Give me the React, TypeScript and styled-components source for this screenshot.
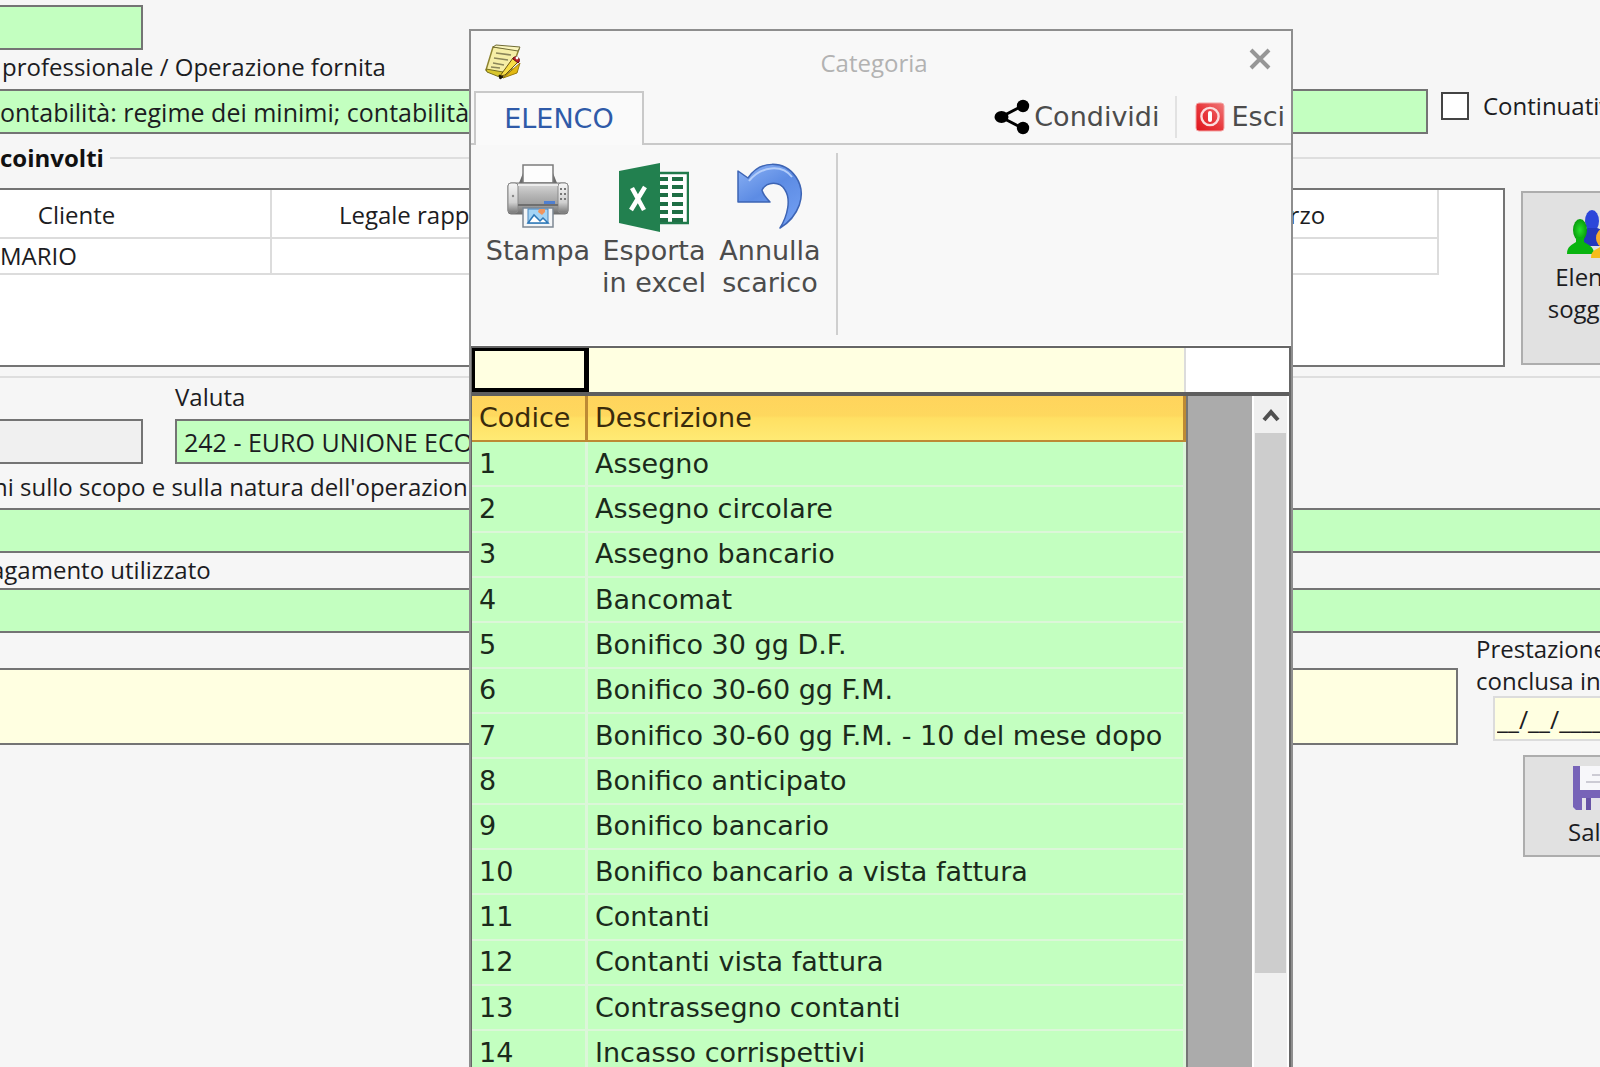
import React from "react";
import styled, { createGlobalStyle, css } from "styled-components";

const GREEN = "#c3ffc0";
const CREAM = "#ffffe1";
const LINE = "#747474";
const UI = '"Open Sans", "Noto Sans", sans-serif';
const GRID = '"DejaVu Sans", Verdana, sans-serif';

const Global = createGlobalStyle`
  *, *::before, *::after { box-sizing: border-box; }
  body { margin: 0; background: #f6f6f6; }
  input, textarea, button { font: inherit; color: inherit; margin: 0; border-radius: 0; outline: none; }
`;

const Screen = styled.div`
  position: relative;
  height: 100vh;
  overflow: hidden;
  background: #f6f6f6;
  color: #1c1c22;
  font: 24px/34px ${UI};
  white-space: nowrap;
`;

const Form = styled.form`
  display: flex;
  flex-direction: column;
  padding-top: 5px;
`;

const Row = styled.div<{ $gap?: number }>`
  display: flex;
  align-items: flex-start;
  gap: ${(p) => p.$gap ?? 0}px;
`;

const Label = styled.label<{ $lead?: number; $above?: number; $below?: number }>`
  display: block;
  margin: ${(p) => p.$above ?? 0}px 0 ${(p) => p.$below ?? 4}px ${(p) => p.$lead ?? 0}px;
`;

const fieldBox = css<{ $tone?: string; $width?: number; $bleed?: boolean }>`
  background: ${(p) => p.$tone ?? GREEN};
  border: 2px solid ${LINE};
  ${(p) => (p.$width ? `flex: none; width: ${p.$width}px;` : "flex: 1; width: 100%;")}
  min-width: 0;
  padding: 0 7px;
  ${(p) => p.$bleed && "border-left: 0; padding-left: 0;"}
`;

const Field = styled.input<{ $tone?: string; $width?: number; $bleed?: boolean; $open?: boolean }>`
  ${fieldBox}
  display: block;
  height: 45px;
  font-size: 25px;
  ${(p) => p.$open && "border-right: 0;"}
`;

const Notes = styled.textarea<{ $tone?: string; $bleed?: boolean }>`
  ${fieldBox}
  height: 77px;
  margin-top: 35px;
  resize: none;
`;

const CheckLabel = styled.label`
  display: flex;
  align-items: center;
  gap: 14px;
  width: 159px;
  height: 34px;
`;

const Check = styled.input`
  appearance: none;
  flex: none;
  width: 28px;
  height: 28px;
  background: #fff;
  border: 2px solid #444;
`;

const Group = styled.fieldset`
  margin: 7px 0 2px;
  padding: 13px 0 9px;
  min-width: 0;
  border: solid #dedede;
  border-width: 2px 0;
`;

const Legend = styled.legend`
  padding: 0 6px 0 0;
  font-weight: 700;
  color: #111;
`;

const People = styled.div`
  flex: 1;
  min-width: 0;
  height: 179px;
  overflow: hidden;
  background: #fff;
  border: 2px solid ${LINE};
  border-left: 0;
`;

const PeopleTable = styled.table`
  table-layout: fixed;
  border-collapse: separate;
  border-spacing: 0;
  width: 1556px;
  margin-left: -117px;

  th, td {
    font-weight: 400;
    border: solid #dcdcdc;
    border-width: 0 2px 2px 0;
  }
  th { height: 49px; padding: 3px 0 0; }
  td { height: 35px; padding: 0 0 0 117px; }
`;

const SideSlot = styled.div`
  flex: none;
  width: 79px;
`;

const PushButton = styled.button<{ $width: number; $height: number; $top: number }>`
  display: flex;
  flex-direction: column;
  align-items: center;
  width: ${(p) => p.$width}px;
  height: ${(p) => p.$height}px;
  margin-top: ${(p) => p.$top}px;
  padding: 0;
  background: #e1e1e1;
  border: 2px solid #adadad;
  line-height: 32px;
`;

const PushIcon = styled.span<{ $top: number }>`
  display: block;
  height: ${(p) => p.$top + 51}px;
  padding-top: ${(p) => p.$top}px;
  line-height: 0;
`;

const Closing = styled.div`
  flex: none;
  width: 124px;
`;

const ClosingLabel = styled.label`
  display: block;
  line-height: 32px;
`;

const DateField = styled.input`
  display: block;
  width: 160px;
  height: 45px;
  margin: -1px 0 14px 17px;
  padding: 0 2px;
  background: ${CREAM};
  border: 2px solid #dcdcdc;
  font-size: 25px;
`;

const SaveSlot = styled.div`
  padding-left: 47px;
`;

const Dialog = styled.section`
  position: absolute;
  top: 29px;
  bottom: 0;
  left: 469px;
  width: 824px;
  display: flex;
  flex-direction: column;
  background: #f8f8f8;
  border: 2px solid #8e8e8e;
  border-bottom: 0;
  font: 27px/32px ${GRID};
  color: #4c4c4c;
`;

const TitleBar = styled.header`
  display: grid;
  grid-template-columns: 60px 1fr 74px;
  align-items: center;
  height: 60px;
  flex: none;
`;

const TitleIcon = styled.span`
  padding: 2px 0 0 13px;
  line-height: 0;
`;

const Title = styled.h1`
  margin: 4px 0 0;
  font: 24px/32px ${UI};
  color: #b2b2b2;
  text-align: center;
`;

const PlainButton = styled.button`
  display: flex;
  align-items: center;
  padding: 0;
  background: none;
  border: 0;
`;

const CloseButton = styled(PlainButton)`
  padding: 0 0 4px 32px;
  height: 56px;
`;

const TabRow = styled.div`
  display: flex;
  flex: none;
  height: 54px;
`;

const TabEdge = styled.span<{ $grow?: boolean }>`
  ${(p) => (p.$grow ? "flex: 1;" : "width: 3px;")}
  border-bottom: 2px solid #c9c9c9;
`;

const Tab = styled.button`
  width: 170px;
  padding: 0;
  background: #fafafa;
  border: 2px solid #c9c9c9;
  border-bottom: 0;
  color: #2f5aa8;
`;

const TabActions = styled.div`
  display: flex;
  align-items: center;
  border-bottom: 2px solid #c9c9c9;
`;

const TabAction = styled(PlainButton)<{ $gap: number }>`
  gap: ${(p) => p.$gap}px;
`;

const TabDivider = styled.span`
  width: 2px;
  height: 42px;
  margin: 0 18px 0 15px;
  background: #e2e2e2;
`;

const Ribbon = styled.div`
  display: flex;
  flex: none;
  height: 201px;
  padding: 8px 0 10px 9px;
  border-bottom: 1px solid #fff;
`;

const RibbonButton = styled.button`
  display: flex;
  flex-direction: column;
  align-items: center;
  width: 116px;
  padding: 10px 0 0;
  background: none;
  border: 0;
  line-height: 32px;
`;

const RibbonIcon = styled.span`
  height: 72px;
  line-height: 0;
`;

const RibbonDivider = styled.span`
  width: 2px;
  margin-left: 8px;
  background: #cfcfcf;
`;

const Browser = styled.div`
  flex: 1;
  min-height: 0;
  display: flex;
  flex-direction: column;
  border: solid #666;
  border-width: 2px 2px 0 1px;
  background: #fff;
`;

const FilterRow = styled.div`
  display: flex;
  flex: none;
  height: 48px;
  border-bottom: 4px solid #5e5e5e;
`;

const CodeFilter = styled.input`
  width: 117px;
  background: ${CREAM};
  border: solid #000;
  border-width: 3px 5px 4px 3px;
`;

const TextFilter = styled.input`
  width: 597px;
  background: ${CREAM};
  border: 0;
  border-right: 2px solid #dcdcdc;
`;

const ListArea = styled.div`
  flex: 1;
  min-height: 0;
  display: flex;
  overflow: hidden;
`;

const List = styled.table`
  flex: none;
  table-layout: fixed;
  border-collapse: separate;
  border-spacing: 0;
  width: 714px;
  height: 681px;
  background: ${GREEN};
  color: #1b2a1b;

  th, td {
    padding: 0 0 0 7px;
    font-weight: 400;
    text-align: left;
    line-height: 32px;
  }
  th {
    height: 46px;
    color: #3a2b0c;
    background: linear-gradient(#ffd45c 0%, #fed85e 45%, #ffe063 50%, #ffea74 100%);
    border: solid #bd8a34;
    border-width: 0 3px 2px 0;
  }
  td {
    border: solid #dcf6d9;
    border-width: 0 3px 2px 0;
  }
`;

const Empty = styled.div`
  flex: 1;
  background: #ababab;
  border-left: 2px solid #757575;
`;

const ScrollBar = styled.div`
  flex: none;
  display: flex;
  flex-direction: column;
  align-items: center;
  width: 37px;
  background: #f0f0f0;
  border: solid #fff;
  border-width: 0 2px;
`;

const ScrollUp = styled(PlainButton)`
  justify-content: center;
  width: 33px;
  height: 37px;
`;

const Thumb = styled.span`
  width: 31px;
  height: 540px;
  background: #cdcdcd;
`;

const NotesIcon = () => (
  <svg width="38" height="36" viewBox="0 0 38 36" aria-hidden="true">
    <path d="M9 3 35 5 27 27 20 33 2 26Z" fill="#f6eea6" stroke="#8e8431" strokeWidth="1.5" />
    <path d="M2 25 19 28 18 34 3 28Z" fill="#d9c62c" stroke="#77701d" />
    <path d="M9 3 12 1 36 3 34 7Z" fill="#fbf6bd" stroke="#6f6a35" strokeWidth="1" />
    <path d="M12 9l15 2M10 14l14 2M9 19l11 2M7 23l9 1" stroke="#8c865a" strokeWidth="1.6" />
    <path d="M36 19 33 29 19 34Z" fill="#e3b911" stroke="#9a7c10" />
    <path d="M16 32 29 14 34 18 21 31Z" fill="#f7dd45" stroke="#6b5410" />
    <path d="M29 14c3-3 8 0 6 4l-1 1-5-4Z" fill="#b8202a" stroke="#6a1016" />
    <circle cx="33" cy="14" r="1.4" fill="#fff" />
    <path d="m16 35-1-4 4 2Z" fill="#1d1604" stroke="#1d1604" />
  </svg>
);

const CloseIcon = () => (
  <svg width="22" height="22" viewBox="0 0 22 22" aria-hidden="true">
    <path d="M2 2 20 20M20 2 2 20" stroke="#969696" strokeWidth="4" />
  </svg>
);

const ShareIcon = () => (
  <svg width="36" height="36" viewBox="0 0 36 36" aria-hidden="true">
    <path d="M28 7 7 18 28 29" fill="none" stroke="#000" strokeWidth="3" />
    <circle cx="29" cy="7" r="6.2" />
    <ellipse cx="7.5" cy="18" rx="7" ry="6" />
    <circle cx="29" cy="29" r="6.2" />
  </svg>
);

const ExitIcon = () => (
  <svg width="30" height="30" viewBox="0 0 30 30" aria-hidden="true">
    <defs>
      <linearGradient id="exit" x1="1" y1="0" x2="0" y2="1">
        <stop offset="0" stopColor="#f07a7a" />
        <stop offset=".5" stopColor="#e8383c" />
        <stop offset="1" stopColor="#e0141c" />
      </linearGradient>
    </defs>
    <rect x="1" y="1" width="28" height="28" rx="3" fill="url(#exit)" stroke="#f3a3a3" />
    <circle cx="15" cy="14.5" r="8.6" fill="none" stroke="#fbdcdc" strokeWidth="2.4" />
    <rect x="13" y="9" width="4" height="11" rx="2" fill="#fff" />
  </svg>
);

const PrinterIcon = () => (
  <svg width="64" height="66" viewBox="0 0 64 66" aria-hidden="true">
    <defs>
      <linearGradient id="shell" x1="0" y1="0" x2="0" y2="1">
        <stop offset="0" stopColor="#d9d9d9" />
        <stop offset=".4" stopColor="#b5b5b5" />
        <stop offset=".75" stopColor="#9b9b9b" />
        <stop offset="1" stopColor="#6c6c6c" />
      </linearGradient>
      <linearGradient id="side" x1="0" y1="0" x2="0" y2="1">
        <stop offset="0" stopColor="#f7f7f7" />
        <stop offset=".65" stopColor="#d0d0d0" />
        <stop offset="1" stopColor="#777" />
      </linearGradient>
    </defs>
    <path d="M13 20 17 10H47L51 20Z" fill="#6d6d6d" />
    <path d="M17 2H47V20H17Z" fill="#fdfdfd" stroke="#7c7c7c" strokeWidth="1.5" />
    <rect x="2" y="20" width="60" height="31" rx="3" fill="url(#shell)" stroke="#707070" />
    <rect x="2" y="20" width="10" height="30" rx="3" fill="url(#side)" stroke="#8a8a8a" />
    <rect x="52" y="20" width="10" height="30" rx="3" fill="url(#side)" stroke="#8a8a8a" />
    <path d="M12 22H52" stroke="#ececec" strokeWidth="2" />
    <path d="M12 42H52" stroke="#6f6f6f" strokeWidth="2" />
    <rect x="38" y="38" width="11" height="3" fill="#4f7fd0" />
    <path d="M55 25v14M59 25v14" stroke="#777" strokeWidth="2" strokeDasharray="2 3" />
    <circle cx="7" cy="33" r="1.2" fill="#888" />
    <path d="M17 45H47V64H17Z" fill="#f4f6f8" stroke="#7d8893" strokeWidth="1.5" />
    <rect x="22" y="46" width="20" height="14" fill="#a4d4f5" stroke="#4a86bd" />
    <path d="M33 46h6v3l-3 3-4-3Z" fill="#f0955e" />
    <path d="m22 60 6-8 6 6 3-3 5 5Z" fill="#fff" stroke="#2d78b8" strokeWidth="1.5" />
  </svg>
);

const ExcelIcon = () => (
  <svg width="70" height="69" viewBox="0 0 70 69" aria-hidden="true">
    <rect x="38" y="10" width="31" height="50" fill="#fff" stroke="#207a4b" strokeWidth="2.5" />
    <g fill="#1f6f45">
      {[14, 22, 30, 39, 47, 55].map((y) => (
        <React.Fragment key={y}>
          <rect x="41" y={y} width="8" height="4" />
          <rect x="53" y={y} width="11" height="4" />
        </React.Fragment>
      ))}
    </g>
    <path d="M0 8 41 0V69L0 60Z" fill="#22804f" />
    <path d="M13 25 25 47M26 24 12 47" stroke="#fff" strokeWidth="4.5" />
  </svg>
);

const UndoIcon = () => (
  <svg width="68" height="68" viewBox="0 0 68 68" aria-hidden="true">
    <defs>
      <linearGradient id="undo" x1="0" y1="0" x2=".6" y2="1">
        <stop offset="0" stopColor="#8db3f5" />
        <stop offset=".5" stopColor="#5d8ce4" />
        <stop offset="1" stopColor="#6f9cf0" />
      </linearGradient>
    </defs>
    <path
      d="M2 8 12 15C24-3 48-3 60 14C72 32 62 54 44 65C52 52 55 36 49 27C44 18 31 18 26 27C27 32 30 35 34 39H2Z"
      fill="url(#undo)"
      stroke="#3d64b4"
      strokeWidth="1.5"
      strokeLinejoin="round"
    />
    <path d="M13 18C25 3 46 1 56 14" fill="none" stroke="#b3cdfa" strokeWidth="2" />
  </svg>
);

const PeopleIcon = () => (
  <svg width="52" height="50" viewBox="0 0 52 50" aria-hidden="true">
    <defs>
      <radialGradient id="greenMan">
        <stop offset="0" stopColor="#27e02c" />
        <stop offset="1" stopColor="#079d0c" />
      </radialGradient>
    </defs>
    <ellipse cx="26" cy="11" rx="7" ry="11" fill="#2c46da" />
    <path d="M15 36V25c2-5 5-6 7-7h9c3 1 6 2 8 7v11Z" fill="#2438bd" />
    <ellipse cx="14" cy="20" rx="7" ry="11" fill="url(#greenMan)" />
    <path d="M1 44c0-8 5-9 9-12v-5h8v5c4 3 10 4 10 12Z" fill="#09b410" />
    <ellipse cx="37" cy="28" rx="7" ry="9" fill="#f7ac2b" />
    <path d="M25 48c0-8 5-8 9-11v-4h7v4c4 3 10 3 10 11Z" fill="#f7bd1d" />
  </svg>
);

const DiskIcon = () => (
  <svg width="50" height="46" viewBox="0 0 50 46" aria-hidden="true">
    <path d="M1 1H49V45H4L1 42Z" fill="#7763b8" />
    <rect x="8" y="1" width="34" height="24" fill="#f7f7fa" />
    <path d="M20 10H38M14 17H38" stroke="#cccbd4" strokeWidth="2" />
    <rect x="10" y="33" width="30" height="12" fill="#e4e3ea" />
    <rect x="14" y="33" width="5" height="12" fill="#6753a6" />
  </svg>
);

const UpIcon = () => (
  <svg width="18" height="14" viewBox="0 0 18 14" aria-hidden="true">
    <path d="M2 12 9 4 16 12" fill="none" stroke="#505050" strokeWidth="4" />
  </svg>
);

const entries = [
  "Assegno",
  "Assegno circolare",
  "Assegno bancario",
  "Bancomat",
  "Bonifico 30 gg D.F.",
  "Bonifico 30-60 gg F.M.",
  "Bonifico 30-60 gg F.M. - 10 del mese dopo",
  "Bonifico anticipato",
  "Bonifico bancario",
  "Bonifico bancario a vista fattura",
  "Contanti",
  "Contanti vista fattura",
  "Contrassegno contanti",
  "Incasso corrispettivi",
];

function OperationForm() {
  return (
    <Form>
      <Row>
        <Field $width={143} $bleed aria-label="Codice operazione" />
      </Row>
      <Label htmlFor="service" $lead={2} $below={5}>
        professionale / Operazione fornita
      </Label>
      <Row $gap={13}>
        <Field id="service" $bleed defaultValue="ontabilità: regime dei minimi; contabilità" />
        <CheckLabel>
          <Check type="checkbox" />
          Continuativa
        </CheckLabel>
      </Row>

      <Group>
        <Legend>coinvolti</Legend>
        <Row $gap={16}>
          <People>
            <PeopleTable>
              <colgroup>
                <col width="389" />
                <col width="388" />
                <col width="491" />
                <col width="288" />
              </colgroup>
              <thead>
                <tr>
                  <th>Cliente</th>
                  <th>Legale rappresentante</th>
                  <th />
                  <th>Terzo</th>
                </tr>
              </thead>
              <tbody>
                <tr>
                  <td>MARIO</td>
                  <td />
                  <td />
                  <td />
                </tr>
              </tbody>
            </PeopleTable>
          </People>
          <SideSlot>
            <PushButton type="button" $width={142} $height={174} $top={3}>
              <PushIcon $top={17}>
                <PeopleIcon />
              </PushIcon>
              <span>Elenco</span>
              <span>soggetti</span>
            </PushButton>
          </SideSlot>
        </Row>
      </Group>

      <Label htmlFor="currency" $lead={175} $below={5}>
        Valuta
      </Label>
      <Row $gap={32}>
        <Field $width={143} $bleed $tone="#f0f0f0" readOnly aria-label="Importo" />
        <Field id="currency" $width={400} defaultValue="242 - EURO UNIONE ECO" />
      </Row>
      <Label htmlFor="purpose" $lead={-7} $above={6}>
        ni sullo scopo e sulla natura dell'operazion
      </Label>
      <Row>
        <Field id="purpose" $bleed $open />
      </Row>
      <Label htmlFor="payment" $lead={-9} $below={1}>
        agamento utilizzato
      </Label>
      <Row>
        <Field id="payment" $bleed $open />
      </Row>

      <Row $gap={18}>
        <Notes $bleed $tone={CREAM} aria-label="Note" />
        <Closing>
          <ClosingLabel htmlFor="closed">
            Prestazione
            <br />
            conclusa in data
          </ClosingLabel>
          <DateField id="closed" defaultValue="__/__/____" />
          <SaveSlot>
            <PushButton type="button" $width={148} $height={102} $top={0}>
              <PushIcon $top={8}>
                <DiskIcon />
              </PushIcon>
              Salva
            </PushButton>
          </SaveSlot>
        </Closing>
      </Row>
    </Form>
  );
}

function CategoryDialog() {
  return (
    <Dialog role="dialog" aria-labelledby="dialog-title">
      <TitleBar>
        <TitleIcon>
          <NotesIcon />
        </TitleIcon>
        <Title id="dialog-title">Categoria</Title>
        <CloseButton type="button" aria-label="Chiudi">
          <CloseIcon />
        </CloseButton>
      </TitleBar>

      <TabRow>
        <TabEdge />
        <Tab type="button">ELENCO</Tab>
        <TabEdge $grow />
        <TabActions>
          <TabAction type="button" $gap={4}>
            <ShareIcon />
            Condividi
          </TabAction>
          <TabDivider />
          <TabAction type="button" $gap={7}>
            <ExitIcon />
            Esci
          </TabAction>
        </TabActions>
        <TabEdge />
        <TabEdge />
      </TabRow>

      <Ribbon>
        <RibbonButton type="button">
          <RibbonIcon>
            <PrinterIcon />
          </RibbonIcon>
          Stampa
        </RibbonButton>
        <RibbonButton type="button">
          <RibbonIcon>
            <ExcelIcon />
          </RibbonIcon>
          <span>Esporta</span>
          <span>in excel</span>
        </RibbonButton>
        <RibbonButton type="button">
          <RibbonIcon>
            <UndoIcon />
          </RibbonIcon>
          <span>Annulla</span>
          <span>scarico</span>
        </RibbonButton>
        <RibbonDivider />
      </Ribbon>

      <Browser>
        <FilterRow>
          <CodeFilter aria-label="Filtra codice" />
          <TextFilter aria-label="Filtra descrizione" />
        </FilterRow>
        <ListArea>
          <List>
            <colgroup>
              <col width="116" />
              <col width="598" />
            </colgroup>
            <thead>
              <tr>
                <th>Codice</th>
                <th>Descrizione</th>
              </tr>
            </thead>
            <tbody>
              {entries.map((name, i) => (
                <tr key={name}>
                  <td>{i + 1}</td>
                  <td>{name}</td>
                </tr>
              ))}
            </tbody>
          </List>
          <Empty />
          <ScrollBar>
            <ScrollUp type="button" aria-label="Scorri in alto">
              <UpIcon />
            </ScrollUp>
            <Thumb />
          </ScrollBar>
        </ListArea>
      </Browser>
    </Dialog>
  );
}

export default function App() {
  return (
    <>
      <Global />
      <Screen>
        <OperationForm />
        <CategoryDialog />
      </Screen>
    </>
  );
}
